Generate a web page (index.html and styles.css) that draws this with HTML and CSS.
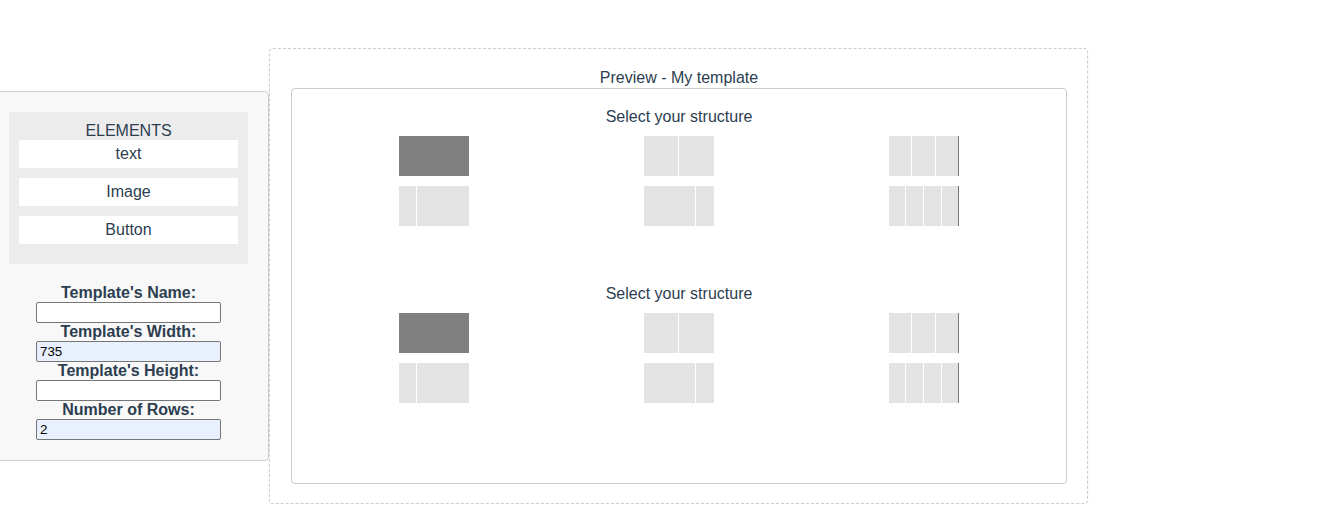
FILE: index.html
```html
<!DOCTYPE html>
<html>
<head>
<meta charset="utf-8">
<link rel="stylesheet" href="styles.css">
</head>
<body>
<div class="page">
  <aside class="panel">
    <div class="elements">
      <div class="elements-title">ELEMENTS</div>
      <div class="element">text</div>
      <div class="element">Image</div>
      <div class="element">Button</div>
    </div>
    <form class="settings">
      <label class="field-label">Template's Name:</label>
      <input class="field" type="text" value="">
      <label class="field-label">Template's Width:</label>
      <input class="field filled" type="text" value="735">
      <label class="field-label">Template's Height:</label>
      <input class="field" type="text" value="">
      <label class="field-label">Number of Rows:</label>
      <input class="field filled" type="text" value="2">
    </form>
  </aside>

  <section class="preview">
    <div class="preview-title">Preview - My template</div>
    <div class="canvas">
      <div class="structure">
        <div class="structure-title">Select your structure</div>
        <div class="options">
          <div class="option">
            <div class="thumb"><span class="cell dark w70"></span></div>
            <div class="thumb"><span class="cell w17"></span><span class="cell w52"></span></div>
          </div>
          <div class="option">
            <div class="thumb"><span class="cell w34"></span><span class="cell w35"></span></div>
            <div class="thumb"><span class="cell w51"></span><span class="cell w18"></span></div>
          </div>
          <div class="option">
            <div class="thumb edge"><span class="cell w22"></span><span class="cell w23"></span><span class="cell w22"></span></div>
            <div class="thumb edge"><span class="cell w16"></span><span class="cell w17"></span><span class="cell w17"></span><span class="cell w16"></span></div>
          </div>
        </div>
      </div>
      <div class="structure">
        <div class="structure-title">Select your structure</div>
        <div class="options">
          <div class="option">
            <div class="thumb"><span class="cell dark w70"></span></div>
            <div class="thumb"><span class="cell w17"></span><span class="cell w52"></span></div>
          </div>
          <div class="option">
            <div class="thumb"><span class="cell w34"></span><span class="cell w35"></span></div>
            <div class="thumb"><span class="cell w51"></span><span class="cell w18"></span></div>
          </div>
          <div class="option">
            <div class="thumb edge"><span class="cell w22"></span><span class="cell w23"></span><span class="cell w22"></span></div>
            <div class="thumb edge"><span class="cell w16"></span><span class="cell w17"></span><span class="cell w17"></span><span class="cell w16"></span></div>
          </div>
        </div>
      </div>
    </div>
  </section>
</div>
</body>
</html>
```

FILE: styles.css
```css
* { box-sizing: border-box; }

html, body {
  margin: 0;
  padding: 0;
  background: #ffffff;
}

body {
  font-family: "Liberation Sans", Arial, Helvetica, sans-serif;
  font-size: 16px;
  color: #2c3e50;
  overflow: hidden;
}

.page {
  display: flex;
  align-items: flex-start;
}

/* Left panel */
.panel {
  margin-left: -12px;
  margin-top: 91px;
  width: 281px;
  padding: 20px 20px 20px 20px;
  background: #f8f8f8;
  border: 1px solid #d0d0d0;
  border-radius: 4px;
}

.elements {
  background: #ececec;
  padding: 10px 10px 20px;
  display: flex;
  flex-direction: column;
  gap: 10px;
}

.elements-title {
  text-align: center;
  line-height: 18px;
  margin-bottom: -10px;
}

.element {
  background: #ffffff;
  height: 28px;
  line-height: 28px;
  text-align: center;
}

.settings {
  margin-top: 20px;
  display: flex;
  flex-direction: column;
  align-items: center;
}

.field-label {
  font-weight: bold;
  line-height: 18px;
  text-align: center;
}

.field {
  width: 185px;
  height: 21px;
  margin: 0;
  padding: 1px 3px;
  border: 1px solid #767676;
  border-radius: 2px;
  background: #ffffff;
  font-family: "Liberation Sans", Arial, sans-serif;
  font-size: 13.33px;
  color: #000000;
}

.field.filled {
  background: #e8f0fe;
}

/* Preview */
.preview {
  margin-top: 48px;
  width: 819px;
  padding: 18px 20px 19px 21px;
  border: 1px dashed #cccccc;
  border-radius: 4px;
  box-shadow: 0 1px 3px rgba(0, 0, 0, 0.04);
}

.preview-title {
  text-align: center;
  line-height: 21px;
}

.canvas {
  border: 1px solid #cccccc;
  border-radius: 4px;
  padding: 19px 0 80px;
  display: flex;
  flex-direction: column;
  gap: 59px;
}

.structure-title {
  text-align: center;
  line-height: 18px;
  margin-bottom: 10px;
}

.options {
  width: 735px;
  margin: 0 auto;
  display: grid;
  grid-template-columns: repeat(3, 1fr);
}

.option {
  display: flex;
  flex-direction: column;
  align-items: center;
  gap: 10px;
}

.thumb {
  width: 70px;
  height: 40px;
  display: flex;
  gap: 1px;
  background: #ffffff;
}

.thumb.edge {
  border-right: 1px solid #777777;
}

.cell {
  display: block;
  height: 40px;
  background: #e3e3e3;
}

.cell.dark { background: #808080; }

.w70 { width: 70px; }
.w17 { width: 17px; }
.w52 { width: 52px; }
.w34 { width: 34px; }
.w35 { width: 35px; }
.w51 { width: 51px; }
.w18 { width: 18px; }
.w22 { width: 22px; }
.w23 { width: 23px; }
.w16 { width: 16px; }
```
